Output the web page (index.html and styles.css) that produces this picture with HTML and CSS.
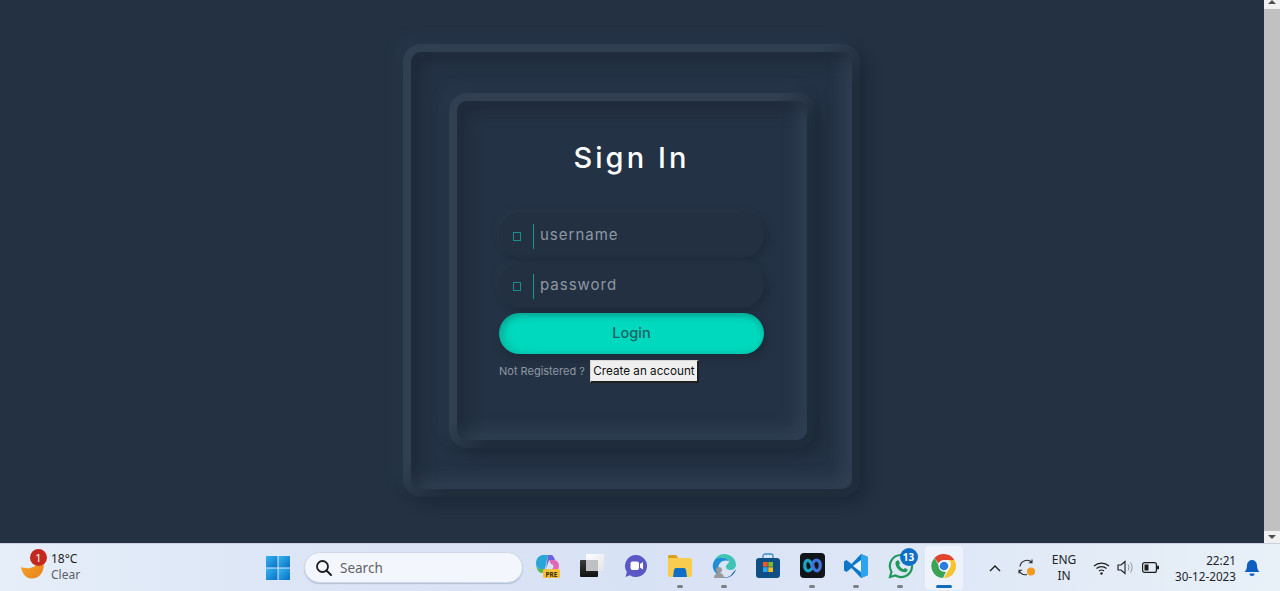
FILE: index.html
```html
<!DOCTYPE html>
<html lang="en">
<head>
<meta charset="utf-8">
<title>Sign In</title>
<link rel="stylesheet" href="styles.css">
</head>
<body>
<div class="window">
  <main class="page">
    <section class="neu frame">
      <div class="neu card">
        <h1 class="title">Sign In</h1>
        <form class="form">
          <label class="field">
            <span class="glyph"></span>
            <span class="rule"></span>
            <span class="hint">username</span>
          </label>
          <label class="field">
            <span class="glyph"></span>
            <span class="rule"></span>
            <span class="hint">password</span>
          </label>
          <div class="login">Login</div>
          <div class="signup">
            <span class="signup-text">Not Registered ?</span>
            <span class="create">Create an account</span>
          </div>
        </form>
      </div>
    </section>
  </main>
  <div class="scrollbar">
    <span class="sb-btn"><span class="arrow-up"></span></span>
    <span class="sb-thumb"></span>
    <span class="sb-btn sb-btn-end"><span class="arrow-down"></span></span>
  </div>
</div>
<footer class="taskbar">
  <div class="weather">
    <span class="moon-wrap">
      <svg class="moon" width="26" height="26" viewBox="0 0 26 26">
        <defs><linearGradient id="moonfill" x1="0" y1="0" x2="1" y2="1"><stop offset="0" stop-color="#f9a825"/><stop offset="1" stop-color="#e8801e"/></linearGradient></defs>
        <path d="M1 13C6 15 14 15 18 9 20 6 21 4 22 2 26 10 24 24 12 24.500 6 25 2 19 1 13z" fill="url(#moonfill)"/>
      </svg>
      <span class="moon-badge">1</span>
    </span>
    <span class="weather-text">
      <span class="temp">18°C</span>
      <span class="cond">Clear</span>
    </span>
  </div>
  <svg class="start" width="24" height="24" viewBox="0 0 24 24">
    <defs>
      <linearGradient id="win" x1="0" y1="0" x2="1" y2="1"><stop offset="0" stop-color="#35b6f2"/><stop offset="1" stop-color="#0a6fc4"/></linearGradient>
    </defs>
    <rect x="0" y="0" width="11.500" height="11.500" fill="url(#win)"/>
    <rect x="12.500" y="0" width="11.500" height="11.500" fill="url(#win)"/>
    <rect x="0" y="12.500" width="11.500" height="11.500" fill="url(#win)"/>
    <rect x="12.500" y="12.500" width="11.500" height="11.500" fill="url(#win)"/>
  </svg>
  <div class="search">
    <svg width="18" height="18" viewBox="0 0 18 18"><circle cx="7.500" cy="7.500" r="5.500" fill="none" stroke="#1c1c1c" stroke-width="1.800"/><path d="M11.500 11.500 16 16" stroke="#1c1c1c" stroke-width="2" stroke-linecap="round"/></svg>
    <span class="search-text">Search</span>
  </div>
  <div class="apps">
    <span class="app">
      <svg width="26" height="26" viewBox="0 0 26 26">
        <path d="M8 2h5l-3 14H6C3 16 1 14 1 10c0-4 3-8 7-8z" fill="#2aa5d8"/>
        <path d="M1 10c0 5 2 10 6 10h7l2-4H6C3 16 1 14 1 10z" fill="#5bb94e"/>
        <path d="M13 2h3c2 0 3 2 4 5h-6l-3 9z" fill="#6a62dc"/>
        <path d="M14 7h5c3 0 5 3 5 6 0 4-3 7-6 7h-4l3-4c3-2 1-5-1-5z" fill="#e266b8"/>
        <rect x="8" y="16" width="17" height="9" rx="1.500" fill="#f5c33b"/>
        <text x="16.500" y="23.500" class="pre">PRE</text>
      </svg>
    </span>
    <span class="app">
      <svg width="26" height="26" viewBox="0 0 26 26">
        <defs>
          <linearGradient id="lay1" x1="0" y1="0" x2="1" y2="1"><stop offset="0" stop-color="#fff"/><stop offset="1" stop-color="#e2e4e7"/></linearGradient>
          <linearGradient id="lay2" x1="0" y1="0" x2="0" y2="1"><stop offset="0" stop-color="#3a3a3a"/><stop offset="1" stop-color="#111"/></linearGradient>
        </defs>
        <rect x="7" y="1" width="18" height="17" fill="url(#lay1)"/>
        <rect x="1" y="7" width="18" height="17" rx="1" fill="url(#lay2)"/>
        <rect x="7" y="7" width="12" height="11" fill="#bfc0c1"/>
      </svg>
    </span>
    <span class="app">
      <svg width="26" height="26" viewBox="0 0 26 26">
        <path d="M13 2a11 11 0 1 1-6 20.200L2.500 24l1.300-5A11 11 0 0 1 13 2z" fill="#5b57c4"/>
        <rect x="7.500" y="8.500" width="8.500" height="8.500" rx="2" fill="#fff"/>
        <path d="m17 11 3-2v7.500l-3-2z" fill="#fff"/>
      </svg>
    </span>
    <span class="app app-open">
      <svg width="26" height="24" viewBox="0 0 26 24">
        <path d="M1 3c0-1 .5-2 2-2h6l3 3h11c1 0 2 1 2 2v15c0 1-1 2-2 2H3c-1 0-2-1-2-2z" fill="#f8cc4f"/>
        <path d="M1 3c0-1 .5-2 2-2h6l2 3H1z" fill="#d99f1e"/>
        <path d="M7 16c0-1 1-2 2-2h8c1 0 2 1 2 2l1 7H6z" fill="#0f6fc6"/>
      </svg>
    </span>
    <span class="app app-open">
      <svg width="26" height="26" viewBox="0 0 26 26">
        <path d="M13 1c7 0 12 5 12 11 0 3-3 5-6 5-2 0-4-1-4-3 0-3 3-3 3-6-1-3-5-4-8-3-4 1-8 5-8 10C2 6 7 1 13 1z" fill="#3fc4b4"/>
        <path d="M2 15c-1-5 2-10 6-10 4-1 9 0 10 3-2-1-7-1-9 2-3 4-2 9 2 13-5-1-8-4-9-8z" fill="#1e8fd6"/>
        <path d="M25 16c-1 5-6 9-11 9-1 0-2 0-3-1 4 1 8 0 10-3 1-2 3-3 4-5z" fill="#0f5aa8"/>
        <circle cx="8" cy="17" r="3" fill="#9a9a9a"/>
        <path d="M3 25c0-3 2-5 5-5s5 2 5 5z" fill="#9a9a9a"/>
      </svg>
    </span>
    <span class="app">
      <svg width="26" height="26" viewBox="0 0 26 26">
        <rect x="1" y="5" width="24" height="20" rx="3" fill="#0f4f86"/>
        <path d="M8 5V3c0-1 1-2 2-2h6c1 0 2 1 2 2v2" fill="none" stroke="#3a8ac8" stroke-width="1.300"/>
        <rect x="8" y="9" width="4.700" height="4.700" fill="#ea5a2a"/>
        <rect x="13.300" y="9" width="4.700" height="4.700" fill="#7fba28"/>
        <rect x="8" y="14.300" width="4.700" height="4.700" fill="#2ca5e8"/>
        <rect x="13.300" y="14.300" width="4.700" height="4.700" fill="#fcbd18"/>
      </svg>
    </span>
    <span class="app app-open">
      <svg width="25" height="25" viewBox="0 0 25 25">
        <rect width="25" height="25" rx="4" fill="#111418"/>
        <path d="M12.500 14C11 9 9 7 7 7.500 4 8.500 4 16 7 17.500c2.500 1 4.500-1 5.500-3.500z" fill="none" stroke="#1aa5c9" stroke-width="3.200"/>
        <path d="M12.500 11C14 7 16 6.500 18 7.500c3 1.500 3 8 0 10-2 1-4.500-.5-5.500-6.500z" fill="none" stroke="#3f74dc" stroke-width="3.200"/>
      </svg>
    </span>
    <span class="app app-open">
      <svg width="26" height="26" viewBox="0 0 26 26">
        <path d="M18 1 8.500 11 3.500 7 1 8.500v9L3.500 19l5-4L18 25l7-3V4z" fill="#0b78c8"/>
        <path d="M18 1v24l7-3V4z" fill="#2ea4ec"/>
        <path d="M18 7v12l-8-6z" fill="#eef3fa"/>
      </svg>
    </span>
    <span class="app app-open">
      <span class="wa">
        <svg width="27" height="28" viewBox="0 0 27 28">
          <path d="M14 3a11 11 0 1 1-5.500 20.500L3 25l1.500-5.300A11 11 0 0 1 14 3z" fill="none" stroke="#1f9a5a" stroke-width="2.200"/>
          <path d="M9.500 9c1-1 2-1 2.500 0l1 2.500-1 1.500c1 2 2.500 3.300 4.500 4.300l1.500-1.300 2.500 1.200c.6 1-.4 2.500-2 3-5 .5-10.500-5-10-9.500 0-.8.500-1.300 1-1.700z" fill="#1f9a5a"/>
        </svg>
        <span class="wa-badge">13</span>
      </span>
    </span>
    <span class="app app-active">
      <svg width="26" height="26" viewBox="0 0 26 26">
        <path d="M13 1a12 12 0 0 1 10.400 6H13a6 6 0 0 0-5.500 3.500L3.500 5A12 12 0 0 1 13 1z" fill="#e2432f"/>
        <path d="M23.400 7A12 12 0 0 1 13 25l5-9a6 6 0 0 0 0-9z" fill="#f8c42e"/>
        <path d="M3.500 5 8 13a6 6 0 0 0 7 5.600L12 25A12 12 0 0 1 3.500 5z" fill="#3aa356"/>
        <circle cx="13" cy="13" r="5.500" fill="#fff"/>
        <circle cx="13" cy="13" r="4.300" fill="#2b7de0"/>
      </svg>
    </span>
  </div>
  <div class="tray">
    <svg class="tray-chevron" width="14" height="10" viewBox="0 0 14 10"><path d="M2 8l5-5 5 5" fill="none" stroke="#1d1d1d" stroke-width="1.400"/></svg>
    <svg class="tray-sync" width="20" height="20" viewBox="0 0 20 20">
      <path d="M3 8.500A7 7 0 0 1 15 4.500M15 1.500v3.200h-3.200M2 15.500v-3.300h3.200M2.200 12.500A7 7 0 0 0 10 16.500" fill="none" stroke="#2a2a2a" stroke-width="1.100"/>
      <circle cx="14" cy="13.500" r="4" fill="#f39a1e"/>
    </svg>
    <span class="lang"><span>ENG</span><span>IN</span></span>
    <svg class="tray-wifi" width="17" height="14" viewBox="0 0 17 14">
      <path d="M1 5a11 11 0 0 1 15 0M3.500 7.500a7.500 7.500 0 0 1 10 0M6 10a4 4 0 0 1 5 0" fill="none" stroke="#1d1d1d" stroke-width="1.200"/>
      <circle cx="8.500" cy="12.500" r="1.200" fill="#1d1d1d"/>
    </svg>
    <svg class="tray-vol" width="16" height="15" viewBox="0 0 16 15">
      <path d="M1 5h3l4-3.500v12L4 10H1z" fill="none" stroke="#1d1d1d" stroke-width="1.100"/>
      <path d="M11 4.500c1.200 1.800 1.200 4.200 0 6M13.500 2.500c2 3 2 7 0 10" fill="none" stroke="#8a8f96" stroke-width="1"/>
    </svg>
    <svg class="tray-battery" width="17" height="11" viewBox="0 0 17 11">
      <rect x=".6" y=".6" width="13.800" height="9.800" rx="2" fill="none" stroke="#1d1d1d" stroke-width="1.200"/>
      <rect x="2.500" y="2.500" width="4" height="6" fill="#1d1d1d"/>
      <rect x="15" y="3.500" width="2" height="4" rx="1" fill="#1d1d1d"/>
    </svg>
    <span class="clock"><span>22:21</span><span>30-12-2023</span></span>
    <svg class="tray-bell" width="16" height="18" viewBox="0 0 16 18">
      <path d="M8 1c3 0 5 2.500 5 5.500 0 3 1 5 2.500 6.500H.5C2 11.500 3 9.500 3 6.500 3 3.500 5 1 8 1z" fill="#0f5fc0"/>
      <path d="M5.500 14.500h5a2.500 2.500 0 0 1-5 0z" fill="#0f5fc0"/>
    </svg>
  </div>
</footer>
</body>
</html>
```

FILE: styles.css
```css
* {
  box-sizing: border-box;
}

html,
body {
  margin: 0;
  height: 591px;
  overflow: hidden;
}

body {
  display: flex;
  flex-direction: column;
  font-family: "Lato", "Noto Sans", sans-serif;
  background: #233143;
}

.window {
  display: flex;
  height: 543px;
  flex: none;
}

.page {
  flex: 1;
  display: flex;
  justify-content: center;
  padding: 44px 1px 0 0;
  background: #233143;
}

.neu {
  border: 8px solid transparent;
  border-radius: 18px;
  background:
    linear-gradient(#243245, #243245) padding-box,
    linear-gradient(135deg, #303f52 0%, #303f52 46%, #1f2c3c 54%, #1f2c3c 100%) border-box;
  box-shadow:
    7px 7px 14px rgba(20, 29, 41, 0.42),
    -7px -7px 14px rgba(74, 90, 110, 0.14),
    inset 9px 9px 16px rgba(20, 29, 41, 0.38),
    inset -9px -9px 16px rgba(80, 98, 120, 0.3);
}

.frame {
  width: 457px;
  height: 453px;
  padding: 41px 38px;
}

.card {
  width: 366px;
  height: 355px;
  margin: 0 auto;
  padding: 35px 43px 0 42px;
}

.title {
  margin: 0;
  height: 44px;
  line-height: 44px;
  text-align: center;
  color: #fff;
  font-family: "Inter", "Lato", sans-serif;
  font-size: 29px;
  font-weight: 500;
  letter-spacing: 3.100px;
}

.form {
  display: flex;
  flex-direction: column;
  margin-top: 32px;
}

.field {
  display: flex;
  align-items: center;
  height: 46px;
  margin-bottom: 4px;
  padding-left: 14px;
  border-radius: 23px;
  background: #223042;
  box-shadow:
    4px 4px 8px rgba(20, 29, 41, 0.35),
    -2px -2px 6px rgba(70, 86, 106, 0.14);
}

.glyph {
  flex: none;
  width: 8px;
  height: 9px;
  margin-top: 2px;
  border: 1px solid #178f90;
}

.rule {
  flex: none;
  width: 1px;
  height: 25px;
  margin: 2px 6px 0 12px;
  background: #149a98;
}

.hint {
  color: #8f98a3;
  font-family: "Inter", "Lato", sans-serif;
  font-size: 15px;
  letter-spacing: 1px;
  margin-top: -1px;
}

.login {
  height: 41px;
  margin-top: 1px;
  line-height: 40px;
  text-align: center;
  border-radius: 21px;
  background: #00d9bd;
  color: #1f6068;
  font-family: "Inter", "Lato", sans-serif;
  font-size: 14.500px;
  font-weight: 500;
  box-shadow:
    inset 0 3px 6px rgba(20, 90, 90, 0.35),
    inset 6px 0 9px rgba(20, 90, 90, 0.18),
    3px 4px 8px rgba(20, 29, 41, 0.45);
}

.signup {
  display: flex;
  align-items: center;
  margin-top: 6px;
  height: 23px;
  font-family: "Inter", "Lato", sans-serif;
  font-size: 11px;
}

.signup-text {
  color: #8f98a3;
  width: 91px;
  margin-top: -1px;
  white-space: nowrap;
}

.create {
  width: 109px;
  height: 23px;
  line-height: 20px;
  text-align: center;
  font-size: 11.700px;
  color: #111;
  background: #efefef;
  border: 1px solid;
  border-width: 1px 2px 2px 1px;
  border-color: #d8d8d8 #202020 #202020 #d8d8d8;
  white-space: nowrap;
}

.scrollbar {
  width: 16px;
  flex: none;
  display: flex;
  flex-direction: column;
  background: #f1f1f1;
}

.sb-btn {
  height: 9px;
  display: flex;
  justify-content: center;
  align-items: flex-start;
}

.sb-btn-end {
  height: 12px;
  align-items: center;
}

.arrow-up {
  width: 0;
  height: 0;
  border: 4px solid transparent;
  border-top: 0;
  border-bottom-color: #505050;
}

.arrow-down {
  width: 0;
  height: 0;
  border: 4px solid transparent;
  border-bottom: 0;
  border-top-color: #505050;
}

.sb-thumb {
  flex: 1;
  background: #c1c1c1;
}

.taskbar {
  flex: none;
  height: 48px;
  display: flex;
  align-items: center;
  background: linear-gradient(90deg, #e6eef9 0%, #dbe5f6 25%, #d8e2f5 50%, #dfe8f6 75%, #e8f0f8 100%);
  font-family: "Noto Sans", "Open Sans", sans-serif;
  color: #1d1d1d;
  border-top: 1px solid #c9d3e0;
}

.weather {
  width: 266px;
  flex: none;
  display: flex;
  align-items: center;
  padding-left: 20px;
}

.moon-wrap {
  position: relative;
  width: 31px;
  height: 30px;
  display: block;
}

.moon {
  position: absolute;
  left: 0;
  top: 1px;
}

.moon-badge {
  position: absolute;
  left: 10px;
  top: -4px;
  width: 17px;
  height: 17px;
  border-radius: 50%;
  background: #c4281f;
  color: #fff;
  font-size: 11px;
  line-height: 17px;
  text-align: center;
}

.weather-text {
  display: flex;
  flex-direction: column;
  font-size: 12px;
  line-height: 16px;
  margin-top: -1px;
}

.cond {
  color: #5a6068;
}

.start {
  flex: none;
}

.search {
  flex: none;
  width: 219px;
  height: 31px;
  margin-left: 14px;
  padding-left: 10px;
  display: flex;
  align-items: center;
  gap: 7px;
  border-radius: 16px;
  background: #f3f6fc;
  border: 1px solid #cfd8e6;
  box-shadow: 0 1px 1px rgba(90, 110, 140, 0.3);
}

.search-text {
  color: #5f6368;
  font-size: 13.500px;
}

.apps {
  flex: none;
  display: flex;
  margin-left: 3px;
}

.app {
  position: relative;
  width: 44px;
  height: 44px;
  display: flex;
  align-items: center;
  justify-content: center;
  padding-bottom: 4px;
}

.app-open::after,
.app-active::after {
  content: "";
  position: absolute;
  bottom: 2px;
  left: 50%;
  width: 6px;
  height: 3px;
  margin-left: -3px;
  border-radius: 2px;
  background: #7b7f86;
}

.app-active {
  width: 38px;
  margin: 0 3px;
  background: #eef3fb;
  border-radius: 4px;
  padding-bottom: 3px;
}

.app-active::after {
  width: 16px;
  margin-left: -8px;
  background: #0f6cbd;
}

.pre {
  font-family: "Noto Sans", sans-serif;
  font-size: 6.500px;
  font-weight: 700;
  fill: #3a2a10;
  text-anchor: middle;
}

.wa {
  position: relative;
  display: block;
  width: 27px;
  height: 28px;
}

.wa-badge {
  position: absolute;
  left: 13px;
  top: -4px;
  width: 18px;
  height: 18px;
  border-radius: 50%;
  background: #0f6fc6;
  color: #fff;
  font-size: 10px;
  font-weight: 700;
  line-height: 18px;
  text-align: center;
}

.tray {
  flex: 1;
  display: flex;
  align-items: center;
  height: 100%;
  font-size: 12px;
  color: #1f2328;
}

.tray-chevron {
  margin-left: 22px;
}

.tray-sync {
  margin-left: 15px;
}

.lang {
  width: 32px;
  margin-left: 11px;
  display: flex;
  flex-direction: column;
  align-items: center;
  line-height: 16px;
}

.tray-wifi {
  margin-left: 13px;
}

.tray-vol {
  margin-left: 7px;
}

.tray-battery {
  margin-left: 9px;
}

.clock {
  width: 69px;
  margin-left: 8px;
  display: flex;
  flex-direction: column;
  align-items: flex-end;
  line-height: 16px;
  font-size: 11.700px;
}

.tray-bell {
  margin-left: 8px;
}
```
